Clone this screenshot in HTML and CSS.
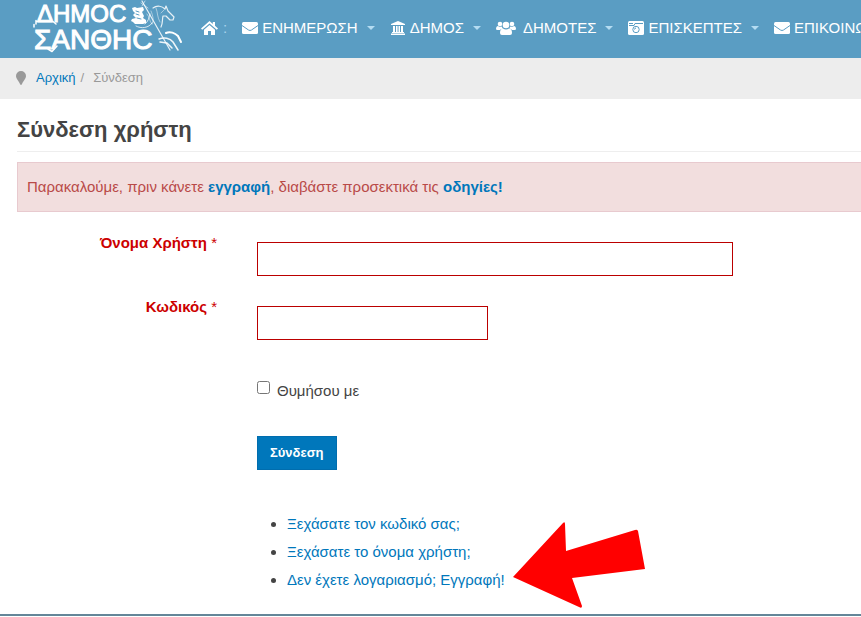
FILE: index.html
```html
<!DOCTYPE html>
<html lang="el">
<head>
  <meta charset="UTF-8" />
  <meta name="viewport" content="width=device-width, initial-scale=1" />
  <title>Σύνδεση χρήστη</title>
  <link rel="stylesheet" href="styles.css">
</head>
<body>
<header class="header">
  <a class="logo" href="#">
    <svg width="150" height="56" viewBox="0 0 150 56">
      <text class="logo-text" x="4" y="22" font-size="24">ΔΗΜΟϹ</text>
      <text class="logo-text" x="1" y="49" font-size="28">ΣΑΝΘΗϹ</text>
      <!-- rider -->
      <g fill="none" stroke="#fff" stroke-linecap="round" stroke-linejoin="round">
        <path stroke-width="1.500" d="M3 20.500V24M3 21.500H20L23 24M1 27V24.500M15 49L19 51.500L24 46" />
        <path fill="#fff" stroke="none" d="M99 8l3-1 2 1 6-1 1 3-2 2 2 4-1 2 3 2v3l-3 1h-8l-2-2-2-1 1-2 4-1-3-3 2-2-2-2z" />
        <path stroke="#5a9dc3" stroke-width="1" d="M103 11l3 1M103 14l3 1M104 18l4 1" />
        <path stroke-width="1.200" opacity=".85" d="M109 1L137 50" />
        <path stroke-width=".8" opacity=".7" d="M108 3L115 8M112 1l-3 5" />
        <path stroke-width="1.200" opacity=".85" d="M120 8C124 5 129 6 132 9L133 6L135 11L141 17L140 20L137 20L133 16L130 16C129 20 130 23 128 27" />
        <path stroke-width=".8" opacity=".6" d="M118 11C120 16 121 20 119 24M123 8C125 13 124 17 127 22M131 10l-3 3M114 14c3 3 2 7 5 10" />
        <path stroke-width="1" opacity=".75" d="M103 26C108 29 116 28 119 23M112 24C115 22 116 18 117 14" />
        <path stroke-width="2" d="M133 33C137 31 142 33 145 36L148 42" />
        <path stroke-width="1.500" opacity=".9" d="M126 39C131 37 137 38 140 42L145 50M127 42L134 43L139 48" />
      </g>
    </svg>
  </a>
  <nav class="menu">
    <a class="menu-item" href="#" aria-label="Αρχική">
      <svg width="17" height="16" viewBox="0 0 17 16" fill="#fff"><path d="M8.500 1L0 8.500l1.200 1.300L8.500 3.500l7.300 6.300L17 8.500l-3-2.700V2h-2.200v2z" /><path d="M8.500 5L3 9.700V15h4v-4h3v4h4V9.700z" /></svg>
      <span class="colon">:</span>
    </a>
    <a class="menu-item" href="#">
      <svg width="16" height="16" viewBox="0 0 16 16"><rect y="2" width="16" height="12" rx="1.500" fill="#fff" /><path d="M0 5.500L6.500 10Q8 11 9.500 10L16 5.500" fill="none" stroke="#5a9dc3" /></svg>
      ΕΝΗΜΕΡΩΣΗ <span class="caret"></span>
    </a>
    <a class="menu-item" href="#">
      <svg width="16" height="16" viewBox="0 0 16 16" fill="#fff"><path d="M8 1l7 3v1H1V4zM3 6h2v6H3zM6 6h1.600v6H6zM8.500 6H10v6H8.500zM11 6h2v6h-2zM2 12h12v1H2zM1 13.500h14V15H1z" /></svg>
      ΔΗΜΟΣ <span class="caret"></span>
    </a>
    <a class="menu-item wide-icon" href="#">
      <svg width="20" height="16" viewBox="0 0 20 16" fill="#fff"><circle cx="4" cy="4" r="2.300" /><circle cx="16" cy="4" r="2.300" /><circle cx="10" cy="5" r="3.300" /><path d="M0 9c0-2 1-3 2-3 1.500 1 3 1 4 .5Q6 8 7 9H5l-1 1H1.500Q0 10 0 9zM20 9c0-2-1-3-2-3-1.500 1-3 1-4 .5Q14 8 13 9h2l1 1h2.500Q20 10 20 9zM4 13c0-3 1-4.500 3-4.500 2 1.300 4 1.300 6 0 2 0 3 1.500 3 4.500q0 2-2 2H6q-2 0-2-2z" /></svg>
      ΔΗΜΟΤΕΣ <span class="caret"></span>
    </a>
    <a class="menu-item" href="#">
      <svg width="16" height="16" viewBox="0 0 16 16"><rect y="1" width="16" height="14" rx="1.500" fill="#fff" /><g fill="none" stroke="#5a9dc3"><path d="M1 3.500h4M1 5.500h5l1-2h8" /><circle cx="8" cy="9.500" r="3.200" /><path d="M6.500 9.500Q6.500 8 8 8" /></g></svg>
      ΕΠΙΣΚΕΠΤΕΣ <span class="caret"></span>
    </a>
    <a class="menu-item" href="#">
      <svg width="16" height="16" viewBox="0 0 16 16"><rect y="2" width="16" height="12" rx="1.500" fill="#fff" /><path d="M0 5.500L6.500 10Q8 11 9.500 10L16 5.500" fill="none" stroke="#5a9dc3" /></svg>
      ΕΠΙΚΟΙΝΩΝΙΑ
    </a>
  </nav>
</header>

<div class="breadcrumb">
  <svg width="10" height="14" viewBox="0 0 10 14"><path d="M5 0a5 5 0 0 1 5 5c0 3-3 5-4 8q-1 2-2 0C3 10 0 8 0 5a5 5 0 0 1 5-5z" fill="#999" /></svg>
  <a href="#">Αρχική</a>
  <span class="divider">/</span>
  <span>Σύνδεση</span>
</div>

<main class="container">
  <h1>Σύνδεση χρήστη</h1>
  <div class="alert">
    Παρακαλούμε, πριν κάνετε <a href="#">εγγραφή</a>, διαβάστε προσεκτικά τις <a href="#">οδηγίες!</a>
  </div>

  <form class="login-form">
    <div class="form-row">
      <label class="form-label" for="username">Όνομα Χρήστη <span>*</span></label>
      <input class="field field-name" type="text" id="username" required />
    </div>
    <div class="form-row">
      <label class="form-label" for="password">Κωδικός <span>*</span></label>
      <input class="field field-password" type="password" id="password" required />
    </div>
    <div class="form-extra">
      <div class="remember">
        <input type="checkbox" id="remember" />
        <label for="remember">Θυμήσου με</label>
      </div>
      <button class="btn" type="submit">Σύνδεση</button>
      <ul class="links">
        <li><a href="#">Ξεχάσατε τον κωδικό σας;</a></li>
        <li><a href="#">Ξεχάσατε το όνομα χρήστη;</a></li>
        <li>
          <span class="register">
            <a href="#">Δεν έχετε λογαριασμό; Εγγραφή!</a>
            <svg class="arrow" width="132" height="86" viewBox="0 0 132 86"><path d="M0 55L50 1Q52 -1 52 2L53 29L122 8Q124 7 125 9L132 47L59 56L69 84Q69 87 66 85Z" fill="#f00" /></svg>
          </span>
        </li>
      </ul>
    </div>
  </form>
</main>
<footer class="footer"></footer>
</body>
</html>
```
FILE: styles.css
```css
* {
  box-sizing: border-box;
}
body {
  margin: 0;
  font-family: "Liberation Sans", Arial, sans-serif;
  font-size: 15px;
  line-height: 20px;
  color: #444;
  background: #fff;
  overflow-x: hidden;
}
a {
  color: #0077bb;
  text-decoration: none;
}
.header {
  display: flex;
  align-items: center;
  height: 58px;
  padding-left: 33px;
  background: #5a9dc3;
  overflow: hidden;
}
.logo {
  flex: none;
  display: block;
  height: 58px;
  margin-right: 18px;
}
.logo-text {
  font-family: "Liberation Sans", Arial, sans-serif;
  fill: #fff;
  stroke: #fff;
  stroke-width: 1px;
}
.menu {
  display: flex;
  gap: 15px;
  height: 56px;
  padding-bottom: 3px;
}
.menu-item {
  flex: none;
  display: flex;
  align-items: center;
  gap: 4px;
  color: #fff;
  white-space: nowrap;
}
.colon {
  margin-left: 1px;
  color: #a9d3ec;
}
.caret {
  margin-left: 5px;
  border-top: 4px solid #b4dcf2;
  border-left: 4px solid transparent;
  border-right: 4px solid transparent;
}
.wide-icon {
  gap: 7px;
}
.wide-icon .caret {
  margin-left: 2px;
}
.breadcrumb {
  display: flex;
  align-items: center;
  height: 41px;
  padding: 0 16px 2px;
  background: #ededed;
  color: #999;
  font-size: 13px;
}
.breadcrumb a {
  margin-left: 10px;
}
.divider {
  margin: 0 9px 0 5px;
}
.container {
  padding: 16px 0 0 17px;
}
h1 {
  margin: 0 0 10px;
  padding-bottom: 6px;
  border-bottom: 1px solid #eee;
  font-size: 22px;
  line-height: 30px;
}
.alert {
  padding: 14px 9px;
  border: 1px solid #e8cacf;
  border-right: 0;
  background: #f2dede;
  color: #b94a48;
}
.alert a {
  font-weight: bold;
}
.login-form {
  padding-top: 30px;
}
.form-row {
  display: flex;
  gap: 40px;
  align-items: flex-start;
  margin-bottom: 30px;
}
.form-label {
  flex: none;
  width: 200px;
  margin-top: -9px;
  text-align: right;
  font-weight: bold;
  color: #c00;
}
.form-label span {
  font-weight: normal;
}
.field {
  height: 34px;
  padding: 6px 8px;
  border: 1px solid #b00;
  border-radius: 0;
  box-shadow: none;
  font: inherit;
}
.field-name {
  width: 476px;
}
.field-password {
  width: 231px;
}
.form-extra {
  padding: 11px 0 20px 240px;
}
.remember {
  display: flex;
  align-items: flex-start;
  gap: 7px;
}
.remember input {
  margin: 0;
}
.btn {
  display: block;
  height: 34px;
  margin-top: 35px;
  padding: 0 12px;
  border: 1px solid #006dae;
  background: #0077bb;
  color: #fff;
  font: bold 13px/20px "Liberation Sans", Arial, sans-serif;
}
.links {
  margin: 40px 0 0;
  padding-left: 30px;
  line-height: 28px;
}
.register {
  position: relative;
  display: inline-block;
}
.arrow {
  position: absolute;
  left: 100%;
  top: -44px;
  margin-left: 8px;
}
.footer {
  border-top: 2px solid #648699;
}
```
